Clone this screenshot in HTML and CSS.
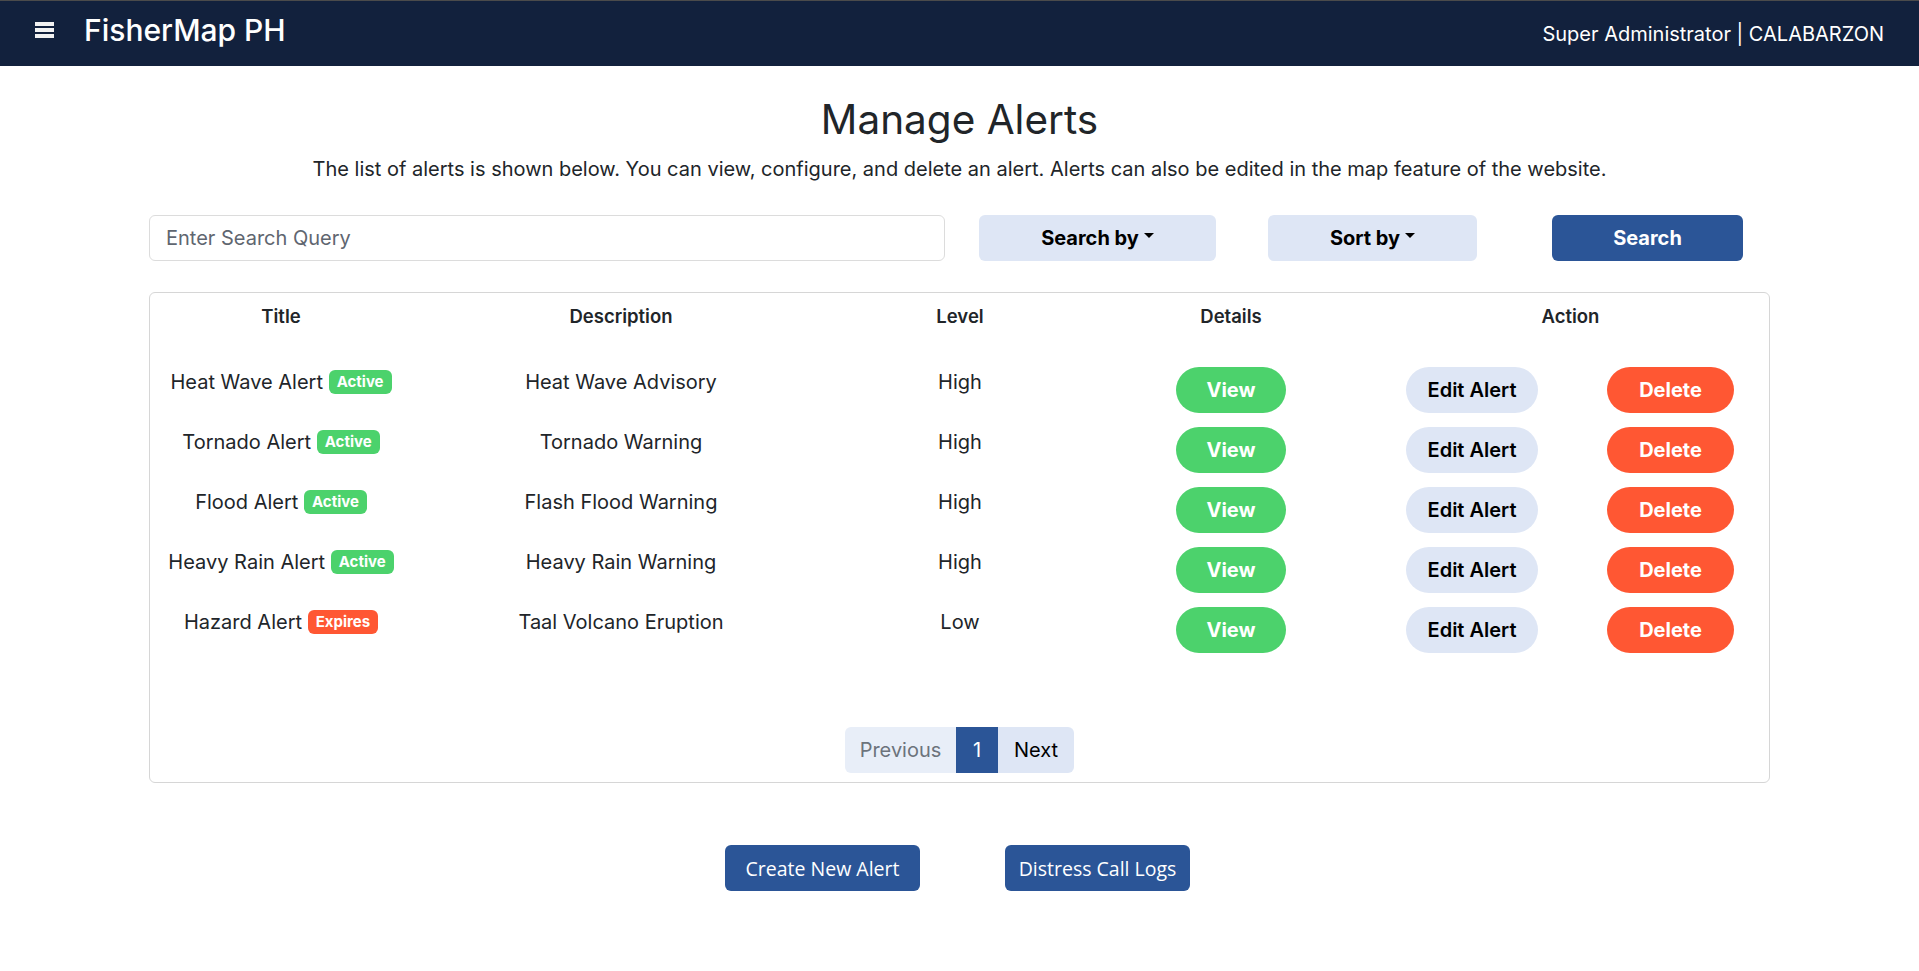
FILE: index.html
```html
<!DOCTYPE html>
<html lang="en">
<head>
<meta charset="utf-8">
<title>FisherMap PH - Manage Alerts</title>
<link rel="stylesheet" href="styles.css">
</head>
<body>
<header class="navbar">
  <div class="nav-left">
    <svg class="hamburger" width="19" height="16" viewBox="0 0 19 16" aria-hidden="true">
      <rect x="0" y="0" width="19" height="4" fill="#f2f2f2"/>
      <rect x="0" y="6" width="19" height="4" fill="#f2f2f2"/>
      <rect x="0" y="12" width="19" height="4" fill="#f2f2f2"/>
    </svg>
    <span class="brand">FisherMap PH</span>
  </div>
  <div class="nav-right">Super Administrator | CALABARZON</div>
</header>

<main class="container">
  <h1 class="title">Manage Alerts</h1>
  <p class="subtitle">The list of alerts is shown below. You can view, configure, and delete an alert. Alerts can also be edited in the map feature of the website.</p>

  <div class="search-row">
    <input class="search-input" type="text" placeholder="Enter Search Query">
    <button class="btn-drop drop-search">Search by<span class="caret"></span></button>
    <button class="btn-drop drop-sort">Sort by<span class="caret"></span></button>
    <button class="btn-search">Search</button>
  </div>

  <section class="card">
    <div class="grid thead">
      <div>Title</div>
      <div>Description</div>
      <div>Level</div>
      <div>Details</div>
      <div class="span2">Action</div>
    </div>

    <div class="grid trow">
      <div class="cell">Heat Wave Alert <span class="badge badge-active">Active</span></div>
      <div class="cell">Heat Wave Advisory</div>
      <div class="cell">High</div>
      <div class="bcell"><button class="pill pill-view">View</button></div>
      <div class="bcell"><button class="pill pill-edit">Edit Alert</button></div>
      <div class="bcell"><button class="pill pill-delete">Delete</button></div>
    </div>
    <div class="grid trow">
      <div class="cell">Tornado Alert <span class="badge badge-active">Active</span></div>
      <div class="cell">Tornado Warning</div>
      <div class="cell">High</div>
      <div class="bcell"><button class="pill pill-view">View</button></div>
      <div class="bcell"><button class="pill pill-edit">Edit Alert</button></div>
      <div class="bcell"><button class="pill pill-delete">Delete</button></div>
    </div>
    <div class="grid trow">
      <div class="cell">Flood Alert <span class="badge badge-active">Active</span></div>
      <div class="cell">Flash Flood Warning</div>
      <div class="cell">High</div>
      <div class="bcell"><button class="pill pill-view">View</button></div>
      <div class="bcell"><button class="pill pill-edit">Edit Alert</button></div>
      <div class="bcell"><button class="pill pill-delete">Delete</button></div>
    </div>
    <div class="grid trow">
      <div class="cell">Heavy Rain Alert <span class="badge badge-active">Active</span></div>
      <div class="cell">Heavy Rain Warning</div>
      <div class="cell">High</div>
      <div class="bcell"><button class="pill pill-view">View</button></div>
      <div class="bcell"><button class="pill pill-edit">Edit Alert</button></div>
      <div class="bcell"><button class="pill pill-delete">Delete</button></div>
    </div>
    <div class="grid trow">
      <div class="cell">Hazard Alert <span class="badge badge-expires">Expires</span></div>
      <div class="cell">Taal Volcano Eruption</div>
      <div class="cell">Low</div>
      <div class="bcell"><button class="pill pill-view">View</button></div>
      <div class="bcell"><button class="pill pill-edit">Edit Alert</button></div>
      <div class="bcell"><button class="pill pill-delete">Delete</button></div>
    </div>

    <nav class="pagination">
      <span class="page page-prev">Previous</span>
      <span class="page page-current">1</span>
      <span class="page page-next">Next</span>
    </nav>
  </section>

  <div class="bottom-actions">
    <button class="btn-primary btn-create">Create New Alert</button>
    <button class="btn-primary btn-logs">Distress Call Logs</button>
  </div>
</main>
</body>
</html>
```

FILE: styles.css
```css
* { box-sizing: border-box; }

body {
  margin: 0;
  font-family: Inter, "Noto Sans", sans-serif;
  color: #212529;
  background: #ffffff;
}

button { font-family: inherit; cursor: pointer; }

.navbar {
  height: 66px;
  background: #12213d;
  border-top: 1px solid #4b4b4b;
  display: flex;
  align-items: center;
  justify-content: space-between;
  padding: 0 35px;
}

.nav-left {
  display: flex;
  align-items: center;
  margin-top: -8px;
}

.hamburger { display: block; margin-right: 30px; }

.brand {
  color: #ffffff;
  font-size: 30px;
  font-weight: 500;
  line-height: 36px;
}

.nav-right {
  color: #ffffff;
  font-size: 20px;
  line-height: 24px;
  margin-top: 1px;
}

.container {
  width: 1621px;
  margin: 0 auto;
}

.title {
  margin: 30px 0 11px;
  font-size: 40.5px;
  font-weight: 400;
  line-height: 48px;
  text-align: center;
}

.subtitle {
  margin: 0;
  padding-top: 1px;
  font-size: 20px;
  line-height: 27px;
  text-align: center;
}

.search-row {
  display: flex;
  align-items: center;
  margin-top: 32px;
  height: 46px;
}

.search-input {
  width: 796px;
  height: 46px;
  border: 1px solid #dcdcdc;
  border-radius: 6px;
  padding: 0 16px;
  font-family: inherit;
  font-size: 20px;
  color: #212529;
}
.search-input::placeholder { color: #5f6670; }

.btn-drop {
  height: 46px;
  border: none;
  border-radius: 6px;
  background: #dee6f5;
  color: #000000;
  font-size: 20px;
  font-weight: 700;
  display: flex;
  align-items: center;
  justify-content: center;
}
.drop-search { width: 237px; margin-left: 34px; }
.drop-sort { width: 209px; margin-left: 52px; }

.caret {
  display: inline-block;
  margin-left: 5px;
  margin-top: -5px;
  border-top: 5px solid #000;
  border-left: 5px solid transparent;
  border-right: 5px solid transparent;
}

.btn-search {
  width: 191px;
  height: 46px;
  margin-left: 75px;
  border: none;
  border-radius: 6px;
  background: #2b5597;
  color: #ffffff;
  font-size: 20px;
  font-weight: 700;
}

.card {
  margin-top: 31px;
  border: 1px solid #d6d6d6;
  border-radius: 6px;
  padding: 10px 0 9px;
}

.grid {
  display: grid;
  grid-template-columns: 262px 418px 260px 282px 200px 197px;
}

.thead {
  font-size: 18.5px;
  font-weight: 600;
  line-height: 27px;
  text-align: center;
  margin-bottom: 37px;
}
.span2 { grid-column: span 2; }

.trow {
  height: 60px;
  align-items: start;
}

.cell {
  text-align: center;
  font-size: 20px;
  line-height: 27px;
  padding-top: 2px;
}

.bcell {
  display: flex;
  justify-content: center;
}

.badge {
  display: inline-block;
  vertical-align: middle;
  margin-top: -3px;
  height: 24px;
  line-height: 24px;
  padding: 0 8px;
  border-radius: 6px;
  color: #ffffff;
  font-size: 15px;
  font-weight: 700;
}
.badge-active { background: #4cd26c; }
.badge-expires { background: #ff5733; }

.pill {
  height: 46px;
  border: none;
  border-radius: 23px;
  font-size: 20px;
  font-weight: 700;
}
.pill-view { width: 110px; background: #4cd26c; color: #ffffff; }
.pill-edit { width: 132px; background: #dee6f5; color: #000000; font-weight: 600; }
.pill-delete { width: 127px; background: #ff5733; color: #ffffff; }

.pagination {
  margin-top: 60px;
  display: flex;
  justify-content: center;
  height: 46px;
}

.page {
  display: flex;
  align-items: center;
  justify-content: center;
  font-size: 20px;
}
.page-prev {
  width: 111px;
  background: #e8eef8;
  color: #6c737c;
  border-radius: 6px 0 0 6px;
}
.page-current {
  width: 42px;
  background: #2b5597;
  color: #ffffff;
}
.page-next {
  width: 76px;
  background: #dee6f5;
  color: #000000;
  border-radius: 0 6px 6px 0;
}

.bottom-actions {
  margin-top: 62px;
  display: flex;
  justify-content: center;
  gap: 85px;
  padding-right: 4px;
}

.btn-primary {
  height: 46px;
  border: none;
  border-radius: 6px;
  background: #2b5597;
  color: #ffffff;
  font-family: "Open Sans", sans-serif;
  font-size: 19.5px;
  white-space: nowrap;
  padding: 0;
}
.btn-create { width: 195px; }
.btn-logs { width: 185px; }
```
